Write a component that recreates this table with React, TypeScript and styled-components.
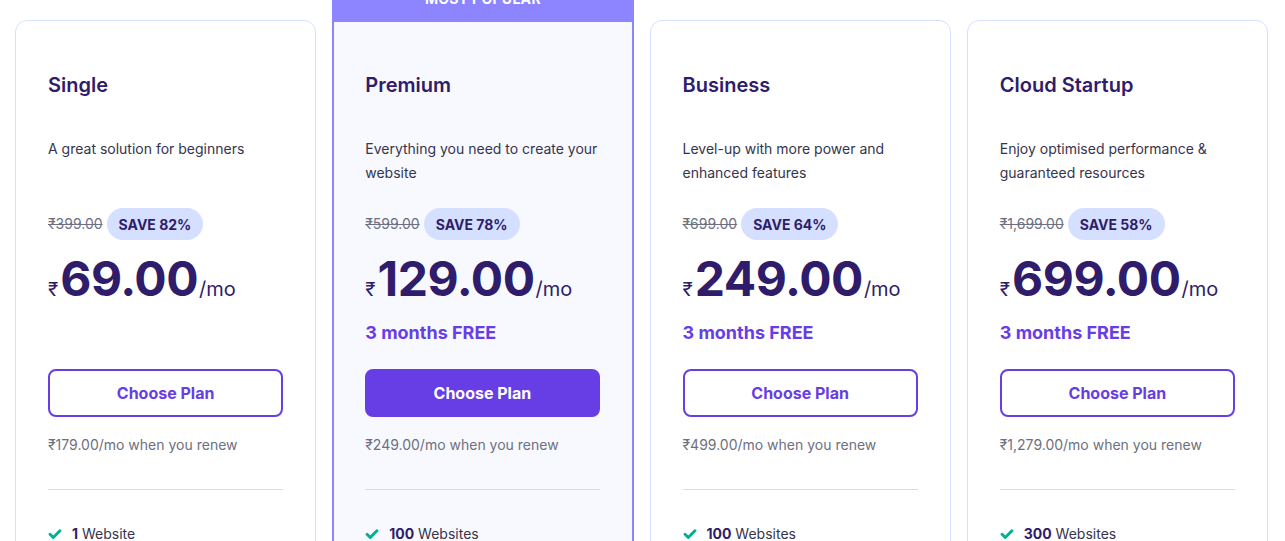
import React, { FC } from 'react';
import styled, { createGlobalStyle } from 'styled-components';

type Plan = {
  name: string;
  description: string;
  oldPrice: string;
  save: string;
  price: string;
  free?: string;
  renew: string;
  featureCount: string;
  featureLabel: string;
  popular?: boolean;
};

const plans: Plan[] = [
  {
    name: 'Single',
    description: 'A great solution for beginners',
    oldPrice: '₹399.00',
    save: 'SAVE 82%',
    price: '69.00',
    renew: '₹179.00/mo when you renew',
    featureCount: '1',
    featureLabel: 'Website',
  },
  {
    name: 'Premium',
    description: 'Everything you need to create your website',
    oldPrice: '₹599.00',
    save: 'SAVE 78%',
    price: '129.00',
    free: '3 months FREE',
    renew: '₹249.00/mo when you renew',
    featureCount: '100',
    featureLabel: 'Websites',
    popular: true,
  },
  {
    name: 'Business',
    description: 'Level-up with more power and enhanced features',
    oldPrice: '₹699.00',
    save: 'SAVE 64%',
    price: '249.00',
    free: '3 months FREE',
    renew: '₹499.00/mo when you renew',
    featureCount: '100',
    featureLabel: 'Websites',
  },
  {
    name: 'Cloud Startup',
    description: 'Enjoy optimised performance & guaranteed resources',
    oldPrice: '₹1,699.00',
    save: 'SAVE 58%',
    price: '699.00',
    free: '3 months FREE',
    renew: '₹1,279.00/mo when you renew',
    featureCount: '300',
    featureLabel: 'Websites',
  },
];

const CheckIcon: FC = () => (
  <svg width="14" height="14" viewBox="0 0 24 24" fill="none">
    <path d="M3.5 12.5l5.5 5.5L20.5 6.5" stroke="#00b090" strokeWidth="5" strokeLinecap="round" strokeLinejoin="round" />
  </svg>
);

const PlanCard: FC<{ plan: Plan }> = ({ plan }) => (
  <Card $popular={plan.popular}>
    {plan.popular && <Ribbon>Most Popular</Ribbon>}
    <Title>{plan.name}</Title>
    <Description>{plan.description}</Description>
    <SaveRow>
      <OldPrice>{plan.oldPrice}</OldPrice>
      <SaveBadge>{plan.save}</SaveBadge>
    </SaveRow>
    <PriceRow>
      <Currency>₹</Currency>
      <Amount>{plan.price}</Amount>
      <Period>/mo</Period>
    </PriceRow>
    <Free>{plan.free}</Free>
    <ChooseButton $filled={plan.popular}>Choose Plan</ChooseButton>
    <Renew>{plan.renew}</Renew>
    <Divider />
    <Features>
      <Feature>
        <CheckIcon />
        <span>
          <b>{plan.featureCount}</b> {plan.featureLabel}
        </span>
      </Feature>
    </Features>
  </Card>
);

export default function App() {
  return (
    <>
      <GlobalStyle />
      <Page>
        {plans.map(p => (
          <PlanCard key={p.name} plan={p} />
        ))}
      </Page>
    </>
  );
}

const GlobalStyle = createGlobalStyle`
  html, body {
    margin: 0;
    background: #ffffff;
    overflow: hidden;
  }
  body {
    font-family: Inter, "Noto Sans", sans-serif;
    color: #36344d;
  }
`;

const Page = styled.div`
  display: grid;
  grid-template-columns: repeat(4, 1fr);
  gap: 16px;
  padding: 20px 17px 0 15px;
  height: 541px;
  box-sizing: border-box;
  align-items: start;
`;

const Card = styled.div<{ $popular?: boolean }>`
  position: relative;
  display: flex;
  flex-direction: column;
  box-sizing: border-box;
  height: 600px;
  padding: ${({ $popular }) => ($popular ? '47px 32px 0 31px' : '48px 32px 0 32px')};
  background: ${({ $popular }) => ($popular ? '#f8f9ff' : '#ffffff')};
  border: ${({ $popular }) => ($popular ? '2px solid #8c85ff' : '1px solid #d5dfff')};
  border-radius: ${({ $popular }) => ($popular ? '0 0 12px 12px' : '12px')};
`;

const Ribbon = styled.div`
  position: absolute;
  left: -2px;
  right: -2px;
  bottom: 100%;
  height: 42px;
  line-height: 37px;
  background: #8c85ff;
  color: #ffffff;
  font-size: 14px;
  font-weight: 700;
  letter-spacing: 0.3px;
  text-transform: uppercase;
  text-align: center;
`;

const Title = styled.h2`
  margin: 0;
  font-size: 20px;
  line-height: 32px;
  font-weight: 600;
  color: #2f1c6a;
`;

const Description = styled.p`
  margin: 36px 0 0;
  min-height: 48px;
  font-size: 14px;
  line-height: 24px;
  color: #36344d;
`;

const SaveRow = styled.div`
  display: flex;
  align-items: center;
  gap: 4px;
  margin-top: 23px;
`;

const OldPrice = styled.span`
  font-size: 14px;
  line-height: 24px;
  color: #6d7081;
  text-decoration: line-through;
`;

const SaveBadge = styled.span`
  display: inline-flex;
  align-items: center;
  height: 32px;
  padding: 0 12px;
  border-radius: 16px;
  background: #d5dfff;
  color: #2f1c6a;
  font-size: 14px;
  font-weight: 700;
`;

const PriceRow = styled.div`
  display: flex;
  align-items: baseline;
  margin-top: 11px;
  color: #2f1c6a;
  height: 56px;
`;

const Currency = styled.span`
  font-size: 19px;
  margin-right: 2px;
`;

const Amount = styled.span`
  font-size: 48px;
  line-height: 56px;
  font-weight: 700;
  letter-spacing: -0.5px;
`;

const Period = styled.span`
  font-size: 20px;
  margin-left: 1px;
`;

const Free = styled.div`
  margin-top: 14px;
  height: 24px;
  font-size: 18px;
  line-height: 24px;
  font-weight: 700;
  color: #673de6;
`;

const ChooseButton = styled.button<{ $filled?: boolean }>`
  margin-top: 24px;
  height: 48px;
  width: 100%;
  border-radius: 8px;
  border: 2px solid #673de6;
  background: ${({ $filled }) => ($filled ? '#673de6' : '#ffffff')};
  color: ${({ $filled }) => ($filled ? '#ffffff' : '#673de6')};
  font-family: inherit;
  font-size: 16px;
  font-weight: 700;
  cursor: pointer;
`;

const Renew = styled.div`
  margin-top: 16px;
  font-size: 14px;
  line-height: 24px;
  color: #6d7081;
`;

const Divider = styled.hr`
  margin: 32px 0 0;
  border: none;
  border-top: 1px solid #dadce0;
`;

const Features = styled.ul`
  list-style: none;
  margin: 32px 0 0;
  padding: 0;
`;

const Feature = styled.li`
  display: flex;
  align-items: center;
  gap: 10px;
  font-size: 14px;
  line-height: 24px;
  color: #36344d;
  b {
    color: #2f1c6a;
    font-weight: 700;
  }
`;
